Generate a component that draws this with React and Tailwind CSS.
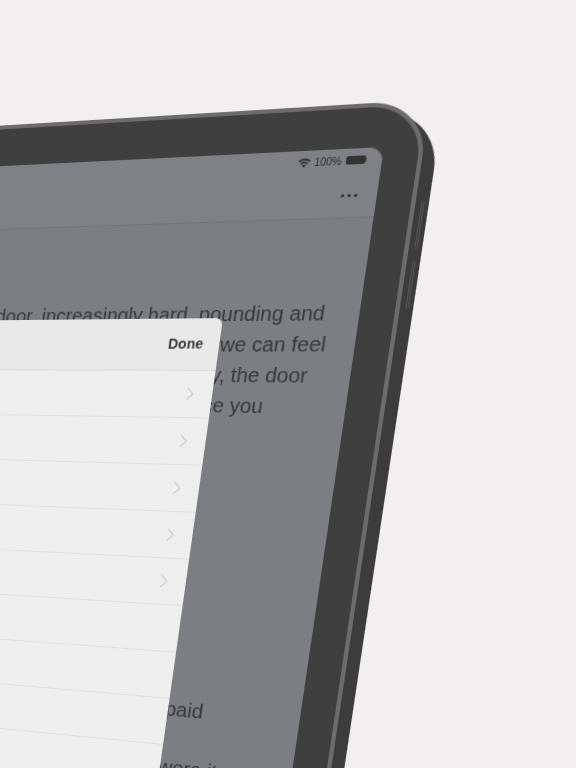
import { ChevronRight } from 'lucide-react';

const SCREEN_W = 400;
const SCREEN_H = 650;

// where the screen's corners land in the photo: top left, top right, bottom right, bottom left
const QUAD = [[-16, 167], [384, 147], [285, 820], [-94, 777]];

function perspective(quad, w, h) {
  const [[x0, y0], [x1, y1], [x2, y2], [x3, y3]] = quad;
  const dx1 = x1 - x2, dx2 = x3 - x2, sx = x0 - x1 + x2 - x3;
  const dy1 = y1 - y2, dy2 = y3 - y2, sy = y0 - y1 + y2 - y3;
  const den = dx1 * dy2 - dx2 * dy1;
  const g = (sx * dy2 - dx2 * sy) / den;
  const k = (dx1 * sy - sx * dy1) / den;
  const m = [
    (x1 - x0 + g * x1) / w, (y1 - y0 + g * y1) / w, 0, g / w,
    (x3 - x0 + k * x3) / h, (y3 - y0 + k * y3) / h, 0, k / h,
    0, 0, 1, 0,
    x0, y0, 0, 1,
  ];
  return `matrix3d(${m.join(',')})`;
}

const textLines = [
  { text: 'door, increasingly hard, pounding and', pad: 'pr-[32px]' },
  { text: 'so much that we can feel', pad: 'pr-[27px]' },
  { text: 'Finally, the door', pad: 'pr-[40px]' },
  { text: 'since you', pad: 'pr-[78px]' },
];

function StatusBar() {
  return (
    <div className="flex h-[22px] items-center justify-end gap-[3px] pr-[14px] text-[10px] text-[#2e2e2e]">
      <svg viewBox="0 0 16 12" className="h-[9px] w-[12px]" fill="currentColor">
        <path d="M8 12 5.600 9.200a3.400 3.400 0 0 1 4.800 0ZM4.500 8 3 6.300a7.200 7.200 0 0 1 10 0L11.500 8a5 5 0 0 0-7 0ZM1.900 5.100.3 3.300a11.300 11.300 0 0 1 15.400 0l-1.600 1.800a9 9 0 0 0-12.200 0Z" />
      </svg>
      <span>100%</span>
      <div className="ml-[1px] flex items-center">
        <div className="h-[8px] w-[18px] rounded-[2px] bg-[#333]" />
        <div className="h-[4px] w-[1px] bg-[#555]" />
      </div>
    </div>
  );
}

function Sheet() {
  const rows = [true, true, true, true, true, false, false, false, false];
  return (
    <div className="absolute top-[160px] right-[129px] bottom-[-100px] left-0 overflow-hidden rounded-tr-[8px] bg-[#eeeeee]">
      <div className="flex h-[52px] items-center justify-end border-b border-[#dcdcdc] bg-[#e9e9e9] pr-[16px] text-[14px] font-bold text-[#3a3a3a]">
        Done
      </div>
      {rows.map((hasChevron, i) => (
        <div key={i} className="flex h-[47px] items-center justify-end border-b border-[#e0e0e0] pr-[11px]">
          {hasChevron && <ChevronRight size={22} strokeWidth={1} className="text-[#bdbdbd]" />}
        </div>
      ))}
    </div>
  );
}

export default function App() {
  return (
    <div className="relative h-[768px] w-[576px] overflow-hidden bg-[#f1eff0] font-['Liberation_Sans',sans-serif]">
      <div
        className="absolute top-0 left-0 origin-top-left blur-[0.5px]"
        style={{ width: SCREEN_W, height: SCREEN_H, transform: perspective(QUAD, SCREEN_W, SCREEN_H) }}
      >
        {/* side of the case, shows past the front face */}
        <div className="absolute top-[-34px] right-[-48px] bottom-[-60px] left-[-60px] rounded-[58px] bg-[#3c3c3c]" />
        <div className="absolute top-[52px] right-[-44px] h-[45px] w-[3px] rounded-full border border-[#555]" />
        <div className="absolute top-[108px] right-[-44px] h-[45px] w-[3px] rounded-full border border-[#555]" />

        {/* front face */}
        <div className="absolute top-[-42px] right-[-36px] bottom-[-60px] left-[-60px] rounded-[54px] border-[4px] border-[#6c6c6c] bg-[#3f3f3f]" />

        <div className="absolute inset-0 overflow-hidden rounded-[14px] bg-[#7d7e81]">
          <div className="h-[66px] border-b border-[#747578] bg-[#808184]">
            <StatusBar />
            <div className="flex justify-end gap-[3px] pt-[21px] pr-[18px]">
              <span className="h-[3px] w-[3px] rounded-full bg-[#333]" />
              <span className="h-[3px] w-[3px] rounded-full bg-[#333]" />
              <span className="h-[3px] w-[3px] rounded-full bg-[#333]" />
            </div>
          </div>

          <div className="pt-[75px] text-right text-[20px] leading-[30px] whitespace-nowrap text-[#38383a]">
            {textLines.map(line => (
              <div key={line.text} className={line.pad}>{line.text}</div>
            ))}
          </div>
          <div className="absolute top-[536px] right-[94px] text-[20px] text-[#38383a]">paid</div>
          <div className="absolute top-[595px] right-[72px] text-[20px] text-[#38383a]">were it</div>

          <Sheet />
        </div>
      </div>
    </div>
  );
}
